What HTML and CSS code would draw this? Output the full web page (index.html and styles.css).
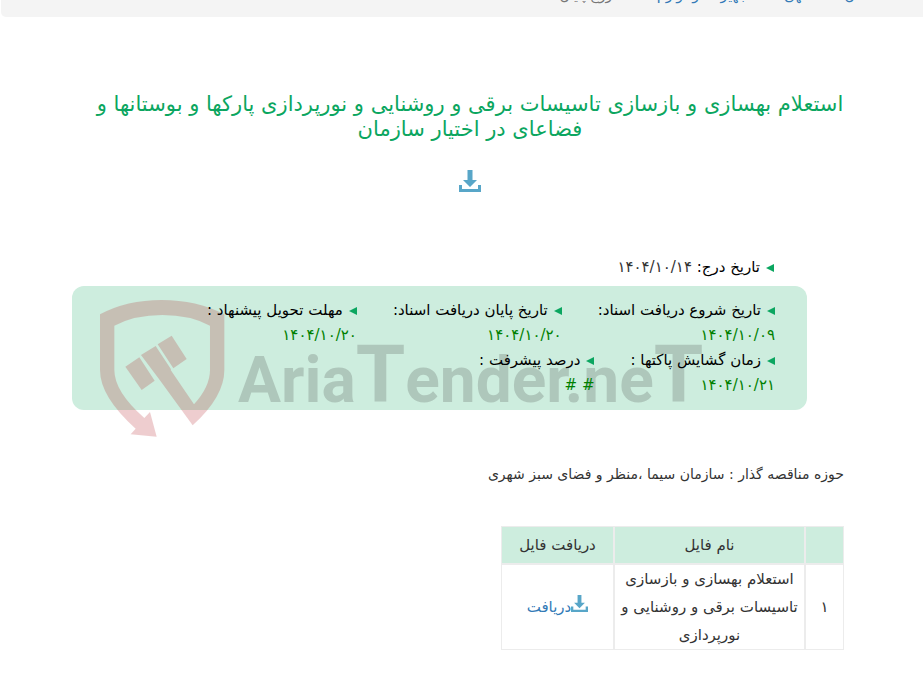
FILE: index.html
```html
<!DOCTYPE html>
<html lang="fa" dir="rtl">
<head>
<meta charset="utf-8">
<title>استعلام بهسازی و بازسازی تاسیسات برقی</title>
<link rel="stylesheet" href="styles.css">
</head>
<body>
<svg class="defs" aria-hidden="true">
  <symbol id="download" viewBox="0 0 22 22">
    <path d="M8.500 0h5v10h4.500l-7 7-7-7h4.500zM0 15h3v4h16v-4h3v7H0z"/>
  </symbol>
</svg>
<nav class="crumbs">
  <a href="#">استان</a>
  <a href="#">آگهی</a>
  <a href="#">تجهیزات و لوازم</a>
  <span>شروع پایان</span>
</nav>
<main class="page">
  <h1 class="title">استعلام بهسازی و بازسازی تاسیسات برقی و روشنایی و نورپردازی پارکها و بوستانها و فضاعای در اختیار سازمان</h1>
  <a class="save" href="#" aria-label="دریافت"><svg class="icon"><use href="#download"/></svg></a>
  <p class="posted"><span class="label">تاریخ درج:</span> ۱۴۰۴/۱۰/۱۴</p>
  <section class="dates">
    <svg class="watermark" viewBox="0 0 610 140" aria-hidden="true">
      <g class="shield" transform="scale(.33333)">
        <path d="M0 43Q80 0 185 0T373 43V210Q373 290 278 376L177 237 123 165 167 138 213 208 212 210 282 313Q330 260 330 210V77Q270 45 187 45T43 77V210Q43 275 133 354L150 336 170 410 92 403 107 386Q0 290 0 210Z"/>
        <path d="M76 200l42-28 46 70-39 28zM173 133l42-26 45 70-40 28z"/>
      </g>
      <text class="brand" x="138" y="102">Aria<tspan class="tall">T</tspan>ender.ne<tspan class="tall">T</tspan></text>
    </svg>
    <dl class="list">
      <div><dt class="label">تاریخ شروع دریافت اسناد:</dt><dd>۱۴۰۴/۱۰/۰۹</dd></div>
      <div><dt class="label">تاریخ پایان دریافت اسناد:</dt><dd>۱۴۰۴/۱۰/۲۰</dd></div>
      <div><dt class="label">مهلت تحویل پیشنهاد :</dt><dd>۱۴۰۴/۱۰/۲۰</dd></div>
      <div><dt class="label">زمان گشایش پاکتها :</dt><dd>۱۴۰۴/۱۰/۲۱</dd></div>
      <div><dt class="label">درصد پیشرفت :</dt><dd># #</dd></div>
    </dl>
  </section>
  <p class="owner">حوزه مناقصه گذار : سازمان سیما ،منظر و فضای سبز شهری</p>
  <table class="files">
    <thead><tr><th class="num"></th><th class="name">نام فایل</th><th class="get">دریافت فایل</th></tr></thead>
    <tbody><tr><td>۱</td><td>استعلام بهسازی و بازسازی تاسیسات برقی و روشنایی و نورپردازی</td><td><a href="#"><svg class="icon small"><use href="#download"/></svg>دریافت</a></td></tr></tbody>
  </table>
</main>
</body>
</html>
```
FILE: styles.css
```css
* { box-sizing: border-box; }
body {
  margin: 0;
  background: #fff;
  color: #333;
  font: 14px/25px "DejaVu Sans", sans-serif;
}
a { color: #337ab7; text-decoration: none; }
p, dl, dd { margin: 0; }
.defs { display: none; }
.crumbs {
  display: flex;
  align-items: flex-end;
  gap: 32px;
  height: 17px;
  margin-left: 1px;
  padding: 0 44px 9px;
  overflow: hidden;
  background: #f4f4f4;
  border-bottom-left-radius: 5px;
  color: #777;
  white-space: nowrap;
}
.page { padding: 75px 79px 28px 96px; }
.title {
  margin: 0 -8px;
  color: #0ba660;
  font-size: 21px;
  font-weight: 400;
  line-height: 25px;
  text-align: center;
}
.icon { width: 22px; height: 22px; fill: #58a6c8; }
.save { display: block; margin-top: 28px; text-align: center; line-height: 22px; }
.save .icon { display: block; margin: 0 auto; }
.posted { margin: 63px 70px 6px 0; font-size: 15px; }
.label { color: #000; }
.label::before {
  content: "";
  display: inline-block;
  margin-left: 6px;
  border: solid transparent;
  border-width: 4px 0 4px 8px;
  border-right: 8px solid #0ba660;
  border-left: 0;
}
.dates {
  position: relative;
  margin: 0 37px 0 -24px;
  padding: 12px 32px;
  background: #cdedde;
  border-radius: 12px;
  font-size: 15px;
}
.list { position: relative; display: flex; flex-wrap: wrap; column-gap: 36px; }
.list dd { color: green; }
.watermark {
  position: absolute;
  left: 28px;
  top: 14px;
  width: 610px;
  height: 140px;
  overflow: visible;
}
.shield { fill: #af0c14; opacity: .2; }
.brand { fill: #373434; opacity: .2; font: bold 64px Roboto, sans-serif; direction: ltr; text-anchor: start; }
.tall { font-size: 80px; }
.owner { margin-top: 52px; }
.files {
  margin-top: 39px;
  width: 343px;
  border-collapse: separate;
  border-spacing: 0;
  font-size: 15px;
  line-height: 28px;
  text-align: center;
}
.files th, .files td { border: 1px solid #ececec; padding: 0 5px; }
.files th { height: 38px; background: #cdedde; font-weight: 400; }
.num { width: 39px; }
.name { width: 191px; }
.small { width: 17px; height: 17px; }
```
